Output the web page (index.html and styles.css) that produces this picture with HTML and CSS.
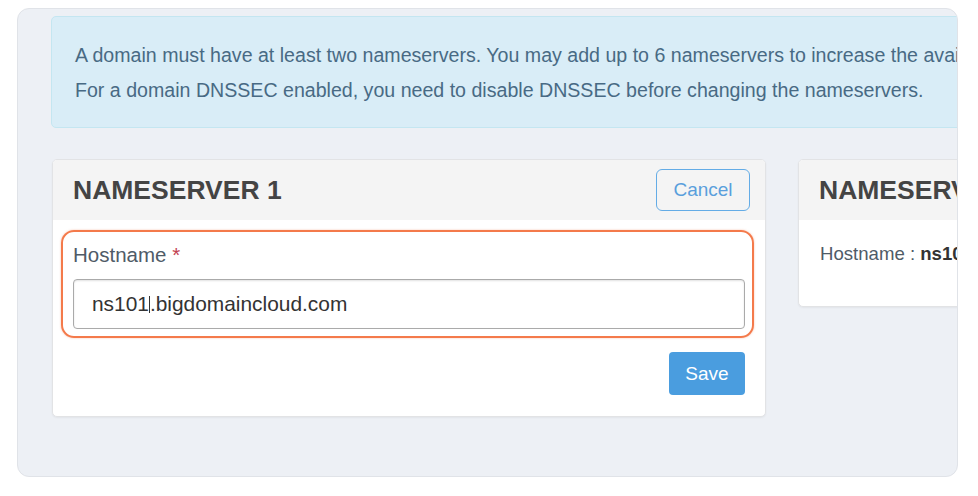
FILE: index.html
```html
<!DOCTYPE html>
<html lang="en">
<head>
    <meta charset="UTF-8">
    <meta name="viewport" content="width=device-width, initial-scale=1.0">
    <title>Nameservers</title>
    <link rel="stylesheet" href="styles.css">
</head>
<body>
    <div class="frame">
        <div class="alert-info">
            A domain must have at least two nameservers. You may add up to 6 nameservers to increase the availability of your domain.<br>
            For a domain DNSSEC enabled, you need to disable DNSSEC before changing the nameservers.
        </div>

        <div class="ns-row">
            <!-- nameserver being edited -->
            <div class="ns-card">
                <div class="ns-card-header">
                    <h3>NAMESERVER 1</h3>
                    <button class="btn-outline">Cancel</button>
                </div>
                <div class="ns-card-body">
                    <div class="form-group">
                        <span class="highlight"></span>
                        <label class="form-label">Hostname <span class="required">*</span></label>
                        <div class="form-input">ns101<span class="caret"></span>.bigdomaincloud.com</div>
                    </div>
                    <div class="form-actions">
                        <button class="btn-primary">Save</button>
                    </div>
                </div>
            </div>

            <div class="ns-card">
                <div class="ns-card-header">
                    <h3>NAMESERVER 2</h3>
                </div>
                <div class="ns-card-body ns-card-view">
                    Hostname : <strong>ns102.bigdomaincloud.com</strong>
                </div>
            </div>
        </div>
    </div>
</body>
</html>
```

FILE: styles.css
```css
body, html {
    margin: 0;
    padding: 0;
    background-color: #fff;
    font-family: "Liberation Sans", Arial, sans-serif;
}

.frame {
    box-sizing: border-box;
    width: 941px;
    height: 469px;
    margin: 8px 0 0 17px;
    padding: 7px 0 0 33px;
    background-color: #edf0f5;
    border: 1px solid #e0e3e8;
    border-radius: 12px;
    overflow: hidden;
}

.alert-info {
    box-sizing: border-box;
    width: 1462px;
    padding: 21px 23px 19px;
    background-color: #d9edf7;
    border: 1px solid #c4e6f1;
    border-radius: 5px;
    color: #486a84;
    font-size: 19.6px;
    line-height: 35px;
    white-space: nowrap;
}

.ns-row {
    display: grid;
    grid-template-columns: 714px 714px;
    gap: 32px;
    align-items: start;
    margin: 31px 0 0 1px;
}

.ns-card {
    background-color: #fff;
    border: 1px solid #e2e3e5;
    border-radius: 5px;
    box-shadow: 0 1px 2px rgba(0, 0, 0, 0.05);
    overflow: hidden;
}

.ns-card-header {
    display: flex;
    align-items: center;
    justify-content: space-between;
    height: 60px;
    padding: 0 15px 0 20px;
    background-color: #f4f4f4;
}

.ns-card-header h3 {
    margin: 0;
    font-size: 26.5px;
    font-weight: bold;
    color: #444;
}

.btn-outline {
    width: 94px;
    height: 42px;
    padding: 0;
    font-family: inherit;
    font-size: 19px;
    color: #5a9fdc;
    background-color: transparent;
    border: 1px solid #64ace6;
    border-radius: 6px;
    cursor: pointer;
}

.ns-card-body {
    padding: 20px 20px 21px;
}

.form-group {
    position: relative;
}

.highlight {
    position: absolute;
    top: -10px;
    right: -9px;
    bottom: -9px;
    left: -12px;
    border: 2.5px solid #f47a4b;
    border-radius: 13px;
    box-shadow: 0 0 2px rgba(244, 122, 75, 0.5);
    pointer-events: none;
}

.form-label {
    display: block;
    margin-bottom: 10px;
    font-size: 20.5px;
    line-height: 29px;
    color: #4f5b67;
}

.required {
    color: #c2404f;
}

.form-input {
    box-sizing: border-box;
    display: flex;
    align-items: center;
    height: 50px;
    padding: 0 18px;
    font-size: 20.9px;
    color: #333;
    border: 1px solid #aaa;
    border-radius: 4px;
    box-shadow: inset 0 1px 2px rgba(0, 0, 0, 0.12);
}

.caret {
    display: inline-block;
    width: 1px;
    height: 17px;
    background-color: #333;
}

.form-actions {
    display: flex;
    justify-content: flex-end;
    margin-top: 23px;
}

.btn-primary {
    width: 76px;
    height: 43px;
    padding: 0;
    font-family: inherit;
    font-size: 19px;
    color: #fff;
    background-color: #4a9ddf;
    border: none;
    border-radius: 4px;
    cursor: pointer;
}

.ns-card-view {
    padding: 21px 21px 39px;
    font-size: 18.6px;
    line-height: 26px;
    color: #4f5b67;
    white-space: nowrap;
}

.ns-card-view strong {
    color: #333;
}
```
